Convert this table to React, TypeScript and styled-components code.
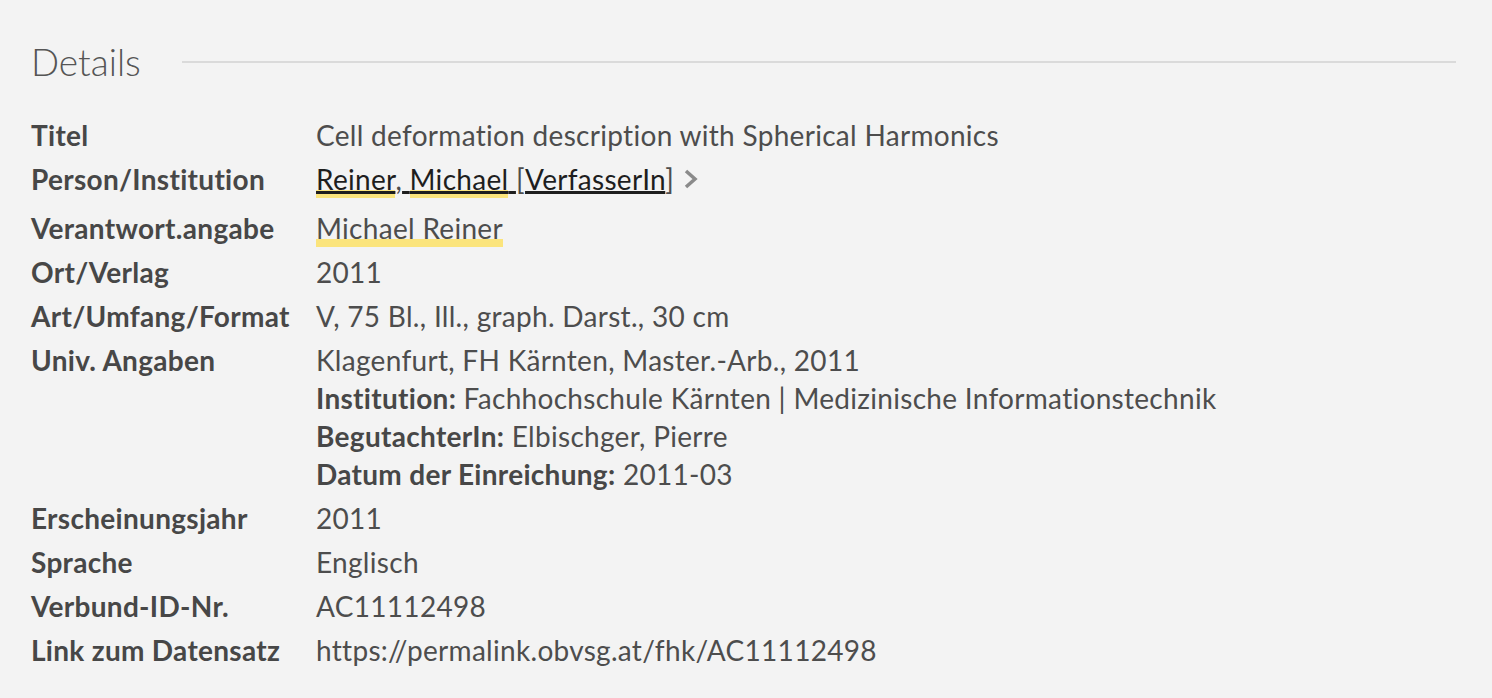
import React from "react";
import styled, { createGlobalStyle } from "styled-components";

const GlobalStyle = createGlobalStyle`
  html, body {
    margin: 0;
    padding: 0;
    background: #f3f3f3;
  }
  body {
    font-family: Lato, "Open Sans", sans-serif;
    color: #4a4a4a;
  }
`;

const Page = styled.div`
  min-height: 698px;
  padding: 38px 36px 0 31px;
  box-sizing: border-box;
  background: #f3f3f3;
`;

const HeaderRow = styled.div`
  display: flex;
  align-items: center;
  height: 48px;
  margin-bottom: 30px;
`;

const Heading = styled.h2`
  margin: 0 41px 0 0;
  font-size: 37px;
  font-weight: 300;
  line-height: 48px;
  color: #555555;
`;

const Rule = styled.div`
  flex: 1;
  height: 2px;
  background: #dadada;
`;

const DetailList = styled.dl`
  display: grid;
  grid-template-columns: 285px 1fr;
  row-gap: 6px;
  margin: 0;
  font-size: 28px;
  line-height: 38px;
  letter-spacing: 0.3px;
`;

const Term = styled.dt<{ $extra?: number }>`
  font-weight: 700;
  color: #474747;
  padding-bottom: ${({ $extra }) => $extra ?? 0}px;
`;

const Value = styled.dd<{ $extra?: number }>`
  margin: 0;
  color: #4d4d4d;
  padding-bottom: ${({ $extra }) => $extra ?? 0}px;
`;

const SubLine = styled.div``;

const SubLabel = styled.strong`
  font-weight: 700;
  color: #474747;
`;

const Highlight = styled.span`
  padding-bottom: 2px;
  background-image: linear-gradient(#fbe47c, #fbe47c);
  background-size: 100% 8px;
  background-position: 0 100%;
  background-repeat: no-repeat;
`;

const NameLink = styled.a`
  color: #1e1e1e;
  text-decoration: underline;
  text-decoration-color: #1e1e1e;
  text-decoration-thickness: 3px;
  text-underline-offset: 1px;
  cursor: pointer;
`;

const PersonLine = styled.span`
  display: inline-flex;
  align-items: center;
  gap: 9px;
`;

const ChevronIcon = styled.svg`
  display: block;
  flex-shrink: 0;
`;

const Chevron = () => (
  <ChevronIcon width="16" height="22" viewBox="0 0 16 22" aria-hidden="true">
    <polyline
      points="3,3 12,11 3,19"
      fill="none"
      stroke="#8a8a8a"
      strokeWidth="3.5"
      strokeLinejoin="miter"
    />
  </ChevronIcon>
);

type Row = { label: string; value: React.ReactNode; extra?: number };

const rows: Row[] = [
  { label: "Titel", value: "Cell deformation description with Spherical Harmonics" },
  {
    label: "Person/Institution",
    extra: 5,
    value: (
      <PersonLine>
        <span>
          <NameLink>
            <Highlight>Reiner</Highlight>
          </NameLink>
          ,
          <NameLink>
            {" "}
            <Highlight>Michael</Highlight>{" "}
          </NameLink>
          [<NameLink>VerfasserIn</NameLink>]
        </span>
        <Chevron />
      </PersonLine>
    ),
  },
  { label: "Verantwort.angabe", value: <Highlight>Michael Reiner</Highlight> },
  { label: "Ort/Verlag", value: "2011" },
  { label: "Art/Umfang/Format", value: "V, 75 Bl., Ill., graph. Darst., 30 cm" },
  {
    label: "Univ. Angaben",
    value: (
      <>
        <SubLine>Klagenfurt, FH Kärnten, Master.-Arb., 2011</SubLine>
        <SubLine>
          <SubLabel>Institution:</SubLabel> Fachhochschule Kärnten | Medizinische Informationstechnik
        </SubLine>
        <SubLine>
          <SubLabel>BegutachterIn:</SubLabel> Elbischger, Pierre
        </SubLine>
        <SubLine>
          <SubLabel>Datum der Einreichung:</SubLabel> 2011-03
        </SubLine>
      </>
    ),
  },
  { label: "Erscheinungsjahr", value: "2011" },
  { label: "Sprache", value: "Englisch" },
  { label: "Verbund-ID-Nr.", value: "AC11112498" },
  { label: "Link zum Datensatz", value: "https://permalink.obvsg.at/fhk/AC11112498" },
];

export default function App() {
  return (
    <>
      <GlobalStyle />
      <Page>
        <HeaderRow>
          <Heading>Details</Heading>
          <Rule />
        </HeaderRow>
        <DetailList>
          {rows.map((row) => (
            <React.Fragment key={row.label}>
              <Term $extra={row.extra}>{row.label}</Term>
              <Value $extra={row.extra}>{row.value}</Value>
            </React.Fragment>
          ))}
        </DetailList>
      </Page>
    </>
  );
}
